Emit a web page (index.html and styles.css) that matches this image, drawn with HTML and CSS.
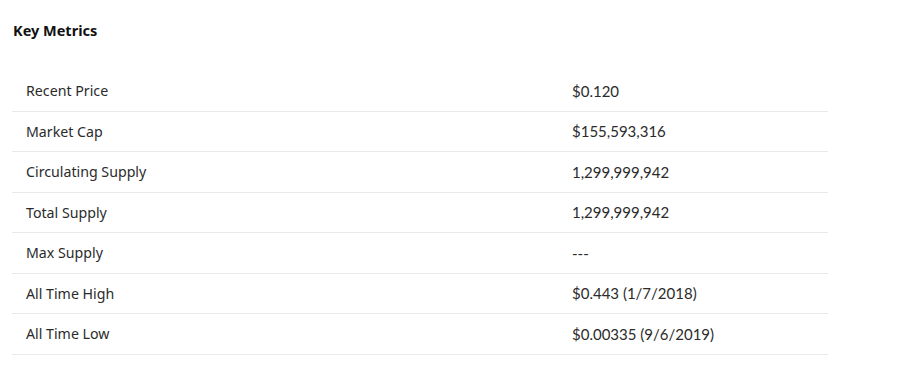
FILE: index.html
```html
<!DOCTYPE html>
<html lang="en">
<head>
  <meta charset="UTF-8">
  <meta name="viewport" content="width=device-width, initial-scale=1.0">
  <title>Key Metrics</title>
  <link rel="stylesheet" href="styles.css">
</head>
<body>
  <h3 class="title">Key Metrics</h3>

  <table class="metrics">
    <tr><td class="name">Recent Price</td><td class="val">$0.120</td></tr>
    <tr><td class="name">Market Cap</td><td class="val">$155,593,316</td></tr>
    <tr><td class="name">Circulating Supply</td><td class="val">1,299,999,942</td></tr>
    <tr><td class="name">Total Supply</td><td class="val">1,299,999,942</td></tr>
    <tr><td class="name">Max Supply</td><td class="val">---</td></tr>
    <tr><td class="name">All Time High</td><td class="val">$0.443 (1/7/2018)</td></tr>
    <tr><td class="name">All Time Low</td><td class="val">$0.00335 (9/6/2019)</td></tr>
  </table>
</body>
</html>
```

FILE: styles.css
```css
body { margin: 0; padding: 0 12px; background: #fff; color: #2b2b2b; font-family: "Noto Sans", Arial, sans-serif; }
.title { font-size: 14.5px; font-weight: 700; margin: 0; padding: 20px 0 0 1px; height: 71px; box-sizing: border-box; color: #111; }
.metrics { border-collapse: collapse; width: 816px; table-layout: fixed; }
.metrics td { border-bottom: 1px solid #e9e9e9; height: 39.5px; padding: 0 14px; font-size: 14.2px; }
.metrics .name { width: 518px; }
.metrics .val { font-family: Lato, Arial, sans-serif; font-size: 15px; }
```
